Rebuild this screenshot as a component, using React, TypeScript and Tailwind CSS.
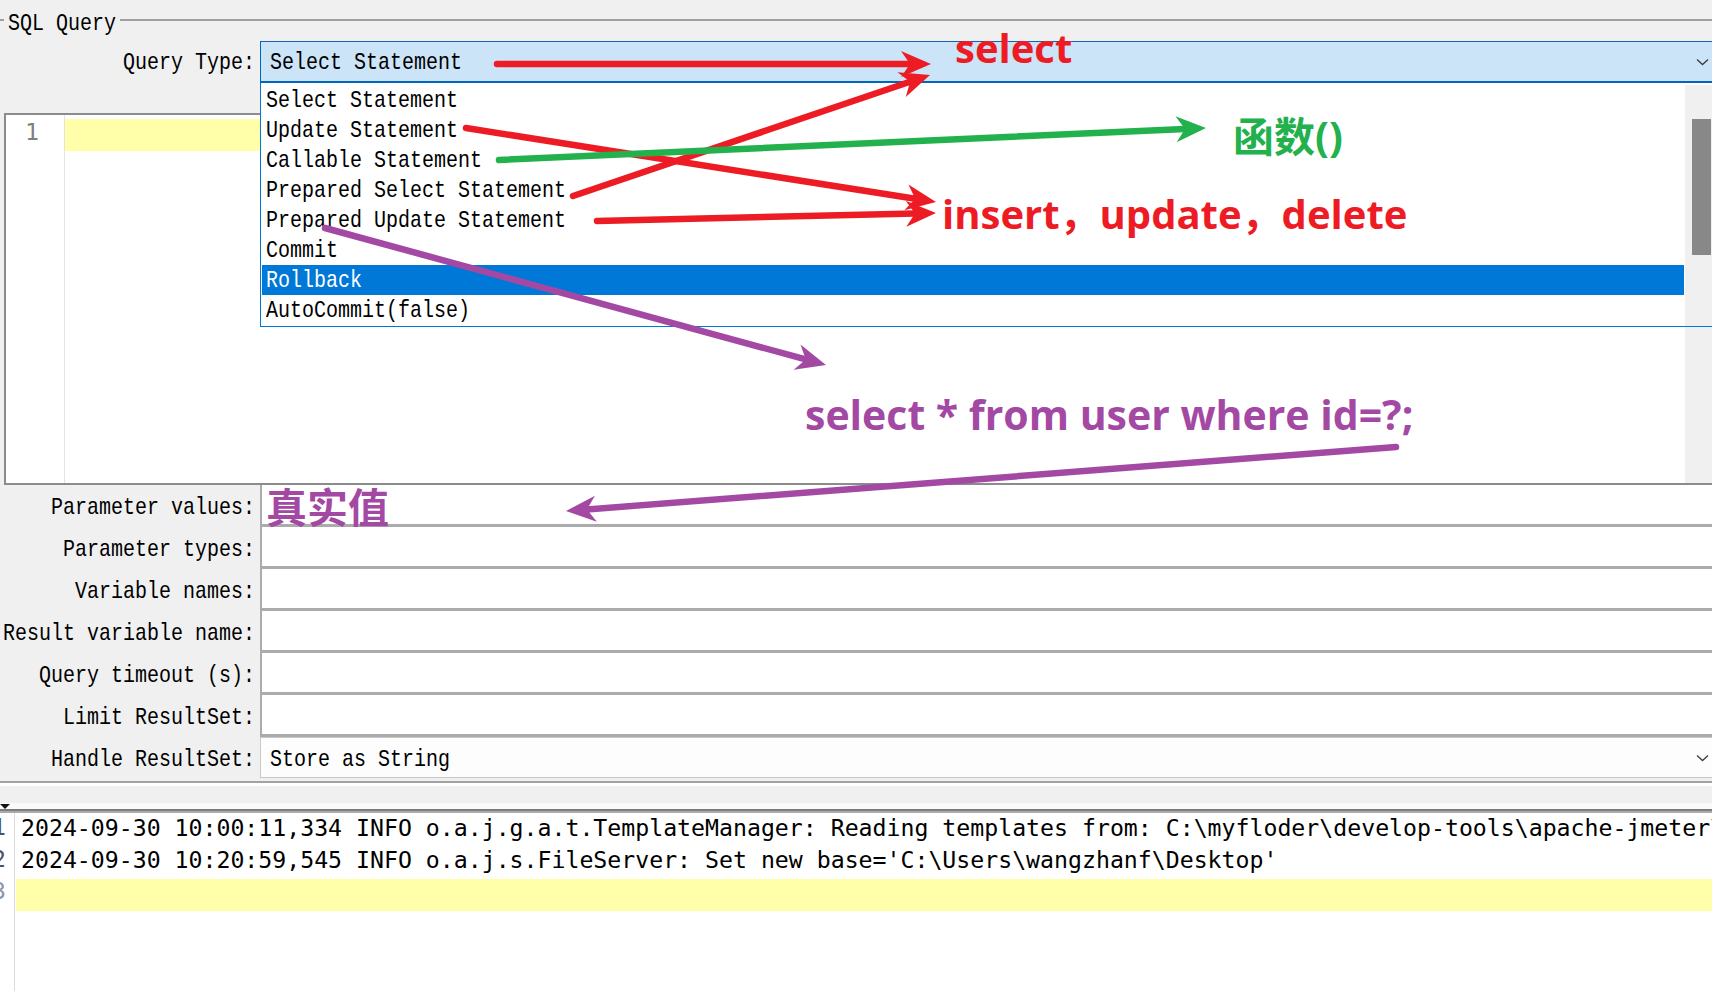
import React from 'react';

const mono = "font-['Liberation_Mono',monospace] text-[20px]";
const logFont = "font-['DejaVu_Sans_Mono',monospace] text-[23.2px]";
const noteFont = "font-['Open_Sans','Noto_Sans_CJK_SC',sans-serif] font-bold leading-none";

const queryTypes = [
  'Select Statement',
  'Update Statement',
  'Callable Statement',
  'Prepared Select Statement',
  'Prepared Update Statement',
  'Commit',
  'Rollback',
  'AutoCommit(false)',
];

const fields = [
  'Parameter values:',
  'Parameter types:',
  'Variable names:',
  'Result variable name:',
  'Query timeout (s):',
  'Limit ResultSet:',
];

const logLines = [
  '2024-09-30 10:00:11,334 INFO o.a.j.g.a.t.TemplateManager: Reading templates from: C:\\myfloder\\develop-tools\\apache-jmeter\\bin\\templates',
  "2024-09-30 10:20:59,545 INFO o.a.j.s.FileServer: Set new base='C:\\Users\\wangzhanf\\Desktop'",
  '',
];

type ArrowProps = { x1: number; y1: number; x2: number; y2: number; color: string };

const arrows: ArrowProps[] = [
  { x1: 497, y1: 64, x2: 931, y2: 64, color: '#ed1c24' },
  { x1: 573, y1: 196, x2: 930, y2: 75, color: '#ed1c24' },
  { x1: 466, y1: 128, x2: 936, y2: 202, color: '#ed1c24' },
  { x1: 597, y1: 221, x2: 936, y2: 213, color: '#ed1c24' },
  { x1: 499, y1: 160, x2: 1206, y2: 128, color: '#22b14c' },
  { x1: 325, y1: 228, x2: 826, y2: 365, color: '#a349a4' },
  { x1: 1396, y1: 447, x2: 566, y2: 511, color: '#a349a4' },
];

// SimSun-like glyphs are taller than Liberation Mono, stretch a bit
function Tall({ children }: { children: React.ReactNode }) {
  return <span className="inline-block scale-y-[1.2] whitespace-pre">{children}</span>;
}

function Chevron() {
  return (
    <svg width="13" height="8" viewBox="0 0 13 8" className="shrink-0">
      <path d="M1 1.5 L6.5 6.5 L12 1.5" fill="none" stroke="#3c3c3c" strokeWidth="1.3" />
    </svg>
  );
}

function Arrow({ x1, y1, x2, y2, color }: ArrowProps) {
  const len = Math.hypot(x2 - x1, y2 - y1);
  const ux = (x2 - x1) / len;
  const uy = (y2 - y1) / len;
  const vx = -uy;
  const vy = ux;
  const L = 30;
  const H = 13;
  const N = 9;
  const bx = x2 - L * ux;
  const by = y2 - L * uy;
  const nx = x2 - (L - N) * ux;
  const ny = y2 - (L - N) * uy;
  const pts = [
    [x2, y2],
    [bx + H * vx, by + H * vy],
    [nx, ny],
    [bx - H * vx, by - H * vy],
  ]
    .map((p) => p.join(','))
    .join(' ');
  return (
    <g>
      <line x1={x1} y1={y1} x2={nx} y2={ny} stroke={color} strokeWidth={6.5} strokeLinecap="round" />
      <polygon points={pts} fill={color} />
    </g>
  );
}

function QueryTypeRow() {
  return (
    <div className="flex h-[42px]">
      <div className={`${mono} w-[255px] pt-[1px] text-right leading-[42px]`}>
        <Tall>Query Type:</Tall>
      </div>
      <div className="relative ml-[5px] flex-1">
        <div className="flex h-full items-center justify-between border-t border-b-2 border-l border-t-[#1a5fb4] border-b-[#0067c0] border-l-[#0067c0] bg-[#cce4f7] pl-[9px] pr-[3px]">
          <span className={`${mono} mt-[2px] leading-[30px]`}>
            <Tall>Select Statement</Tall>
          </span>
          <Chevron />
        </div>

        {/* open popup list */}
        <div className="absolute left-0 right-[-1px] top-full z-10 flex border border-t-0 border-[#0078d7] bg-white">
          <div className="flex-1 px-[1px] pt-[2px] pb-[1px]">
            {queryTypes.map((t) => (
              <div
                key={t}
                className={`${mono} h-[30px] pl-[4px] pt-[1px] leading-[30px] ${t === 'Rollback' ? 'bg-[#0078d7] text-white' : 'text-black'}`}
              >
                <Tall>{t}</Tall>
              </div>
            ))}
          </div>
          <div className="mt-[2px] w-[27px] bg-[#f0f0f0]">
            <div className="ml-[7px] mt-[34px] h-[136px] w-[19px] bg-[#888888]" />
          </div>
        </div>
      </div>
    </div>
  );
}

function Editor() {
  return (
    <div className="mt-[30px] ml-[4px] flex h-[372px] border-y-2 border-l-2 border-[#8c8c8c] bg-white">
      <div className="w-[59px] border-r border-[#e3e3e3] pt-[4px]">
        <div className={`${logFont} h-[32px] pl-[19px] text-[22px] leading-[26px] text-[#7f7f7f]`}>1</div>
      </div>
      <div className="flex-1 pt-[4px]">
        <div className="h-[32px] bg-[#ffffaa]" />
      </div>
      <div className="w-[27px] bg-[#f0f0f0]" />
    </div>
  );
}

function FieldRows() {
  return (
    <div className="flex flex-col">
      {fields.map((label) => (
        <div key={label} className="flex h-[42px]">
          <div className={`${mono} w-[255px] pt-[3px] text-right leading-[39px]`}>
            <Tall>{label}</Tall>
          </div>
          <div className="ml-[5px] flex-1 border-b-[3px] border-l-2 border-[#ababab] bg-white" />
        </div>
      ))}
      <div className="flex h-[41px]">
        <div className={`${mono} w-[255px] pt-[2px] text-right leading-[41px]`}>
          <Tall>Handle ResultSet:</Tall>
        </div>
        <div className="ml-[5px] flex flex-1 items-center justify-between border border-r-0 border-[#c9c9c9] bg-[#fdfdfd] pl-[9px] pr-[3px]">
          <span className={`${mono} mt-[4px] leading-[30px]`}>
            <Tall>Store as String</Tall>
          </span>
          <Chevron />
        </div>
      </div>
    </div>
  );
}

function LogPanel() {
  return (
    <div className="flex min-h-0 flex-1 flex-col">
      <div className="h-[3px]" />
      <div className="h-[2px] bg-[#a3a3a3]" />
      <div className="h-[3px] bg-white" />
      <div className="h-[17px] bg-[#f0f0f0]" />
      <div className="relative h-[6px] bg-[#fafafa]">
        <svg width="10" height="5" viewBox="0 0 10 5" className="absolute left-0 top-[1px]">
          <path d="M0 0 L10 0 L5 5 Z" fill="#111" />
        </svg>
      </div>
      <div className="h-[2px] bg-[#7d7d7d]" />
      <div className="h-[2px] bg-[#ababab]" />
      <div className="flex flex-1 bg-white">
        <div className="w-[15px] overflow-hidden border-r border-[#dcdcdc] pt-[2px]">
          {logLines.map((_, i) => (
            <div
              key={i}
              className={`${logFont} -ml-[8px] h-[32px] w-[14px] leading-[24px] ${i === 2 ? 'text-[#8b97ad]' : 'text-[#4a5568]'}`}
            >
              {i + 1}
            </div>
          ))}
        </div>
        <div className="flex-1 overflow-hidden pt-[2px]">
          {logLines.map((line, i) => (
            <div
              key={i}
              className={`${logFont} ml-[1px] h-[32px] whitespace-pre pl-[5px] leading-[26px] ${i === 2 ? 'bg-[#ffffaa]' : ''}`}
            >
              {line}
            </div>
          ))}
        </div>
      </div>
    </div>
  );
}

function Annotations() {
  return (
    <div className="pointer-events-none absolute inset-0 z-20">
      <svg width="1712" height="991" className="absolute left-0 top-0">
        {arrows.map((a, i) => (
          <Arrow key={i} {...a} />
        ))}
      </svg>
      <span className={`${noteFont} absolute left-[955px] top-[28px] text-[40px] text-[#ed1c24]`}>select</span>
      <span className={`${noteFont} absolute left-[1233px] top-[116px] text-[41px] text-[#22b14c]`}>函数()</span>
      <span className={`${noteFont} absolute left-[942px] top-[194px] text-[40px] text-[#ed1c24] whitespace-pre`}>
        insert，update，delete
      </span>
      <span className={`${noteFont} absolute left-[805px] top-[394px] text-[41px] text-[#a349a4] whitespace-pre`}>
        select * from user where id=?;
      </span>
      <span className="absolute left-[266px] top-[485px] font-['Noto_Sans_CJK_SC',sans-serif] text-[41px] font-bold leading-none text-[#a349a4]">
        真实值
      </span>
    </div>
  );
}

export default function App() {
  return (
    <div className="relative flex h-[991px] w-[1712px] flex-col overflow-hidden bg-[#f0f0f0] text-black">
      {/* titled border of the SQL Query panel */}
      <div className="flex h-[41px] shrink-0 pt-[12px]">
        <div className="mt-[7px] h-[2px] w-[4px] bg-[#a0a0a0]" />
        <span className={`${mono} px-[4px] leading-[24px]`}>
          <Tall>SQL Query</Tall>
        </span>
        <div className="mt-[7px] h-[2px] flex-1 bg-[#a0a0a0]" />
      </div>

      <QueryTypeRow />
      <Editor />
      <FieldRows />
      <LogPanel />

      <Annotations />
    </div>
  );
}
